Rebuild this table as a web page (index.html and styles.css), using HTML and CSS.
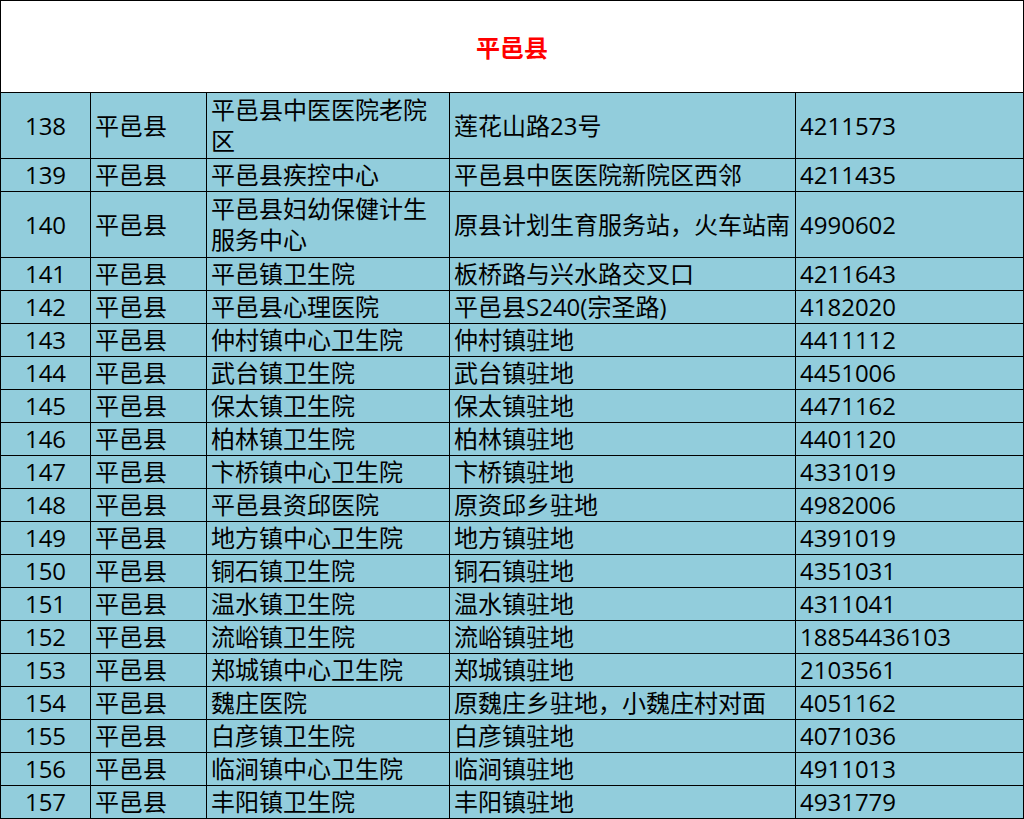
FILE: index.html
```html
<!DOCTYPE html>
<html lang="zh">
<head>
<meta charset="utf-8">
<link rel="stylesheet" href="styles.css">
</head>
<body>
<div class="sheet">
  <div class="title">平邑县</div>

  <div class="c num">138</div><div class="c">平邑县</div><div class="c">平邑县中医医院老院区</div><div class="c">莲花山路23号</div><div class="c">4211573</div>
  <div class="c num">139</div><div class="c">平邑县</div><div class="c">平邑县疾控中心</div><div class="c">平邑县中医医院新院区西邻</div><div class="c">4211435</div>
  <div class="c num">140</div><div class="c">平邑县</div><div class="c">平邑县妇幼保健计生服务中心</div><div class="c">原县计划生育服务站，火车站南</div><div class="c">4990602</div>
  <div class="c num">141</div><div class="c">平邑县</div><div class="c">平邑镇卫生院</div><div class="c">板桥路与兴水路交叉口</div><div class="c">4211643</div>
  <div class="c num">142</div><div class="c">平邑县</div><div class="c">平邑县心理医院</div><div class="c">平邑县S240(宗圣路)</div><div class="c">4182020</div>
  <div class="c num">143</div><div class="c">平邑县</div><div class="c">仲村镇中心卫生院</div><div class="c">仲村镇驻地</div><div class="c">4411112</div>
  <div class="c num">144</div><div class="c">平邑县</div><div class="c">武台镇卫生院</div><div class="c">武台镇驻地</div><div class="c">4451006</div>
  <div class="c num">145</div><div class="c">平邑县</div><div class="c">保太镇卫生院</div><div class="c">保太镇驻地</div><div class="c">4471162</div>
  <div class="c num">146</div><div class="c">平邑县</div><div class="c">柏林镇卫生院</div><div class="c">柏林镇驻地</div><div class="c">4401120</div>
  <div class="c num">147</div><div class="c">平邑县</div><div class="c">卞桥镇中心卫生院</div><div class="c">卞桥镇驻地</div><div class="c">4331019</div>
  <div class="c num">148</div><div class="c">平邑县</div><div class="c">平邑县资邱医院</div><div class="c">原资邱乡驻地</div><div class="c">4982006</div>
  <div class="c num">149</div><div class="c">平邑县</div><div class="c">地方镇中心卫生院</div><div class="c">地方镇驻地</div><div class="c">4391019</div>
  <div class="c num">150</div><div class="c">平邑县</div><div class="c">铜石镇卫生院</div><div class="c">铜石镇驻地</div><div class="c">4351031</div>
  <div class="c num">151</div><div class="c">平邑县</div><div class="c">温水镇卫生院</div><div class="c">温水镇驻地</div><div class="c">4311041</div>
  <div class="c num">152</div><div class="c">平邑县</div><div class="c">流峪镇卫生院</div><div class="c">流峪镇驻地</div><div class="c">18854436103</div>
  <div class="c num">153</div><div class="c">平邑县</div><div class="c">郑城镇中心卫生院</div><div class="c">郑城镇驻地</div><div class="c">2103561</div>
  <div class="c num">154</div><div class="c">平邑县</div><div class="c">魏庄医院</div><div class="c">原魏庄乡驻地，小魏庄村对面</div><div class="c">4051162</div>
  <div class="c num">155</div><div class="c">平邑县</div><div class="c">白彦镇卫生院</div><div class="c">白彦镇驻地</div><div class="c">4071036</div>
  <div class="c num">156</div><div class="c">平邑县</div><div class="c">临涧镇中心卫生院</div><div class="c">临涧镇驻地</div><div class="c">4911013</div>
  <div class="c num">157</div><div class="c">平邑县</div><div class="c">丰阳镇卫生院</div><div class="c">丰阳镇驻地</div><div class="c">4931779</div>
</div>
</body>
</html>
```
FILE: styles.css
```css
html, body {
  margin: 0;
  padding: 0;
  background: #ffffff;
}
.sheet {
  width: 1024px;
  height: 819px;
  box-sizing: border-box;
  background: #000000;
  padding: 1px;
  display: grid;
  grid-template-columns: 89px 115px 242px 345px 227px;
  grid-template-rows: 91px 65px 32px 65px repeat(17, 32px);
  gap: 1px;
  font-family: "Open Sans", "Noto Sans CJK SC", sans-serif;
  font-size: 24px;
  color: #000000;
  overflow: hidden;
}
.title {
  grid-column: 1 / 6;
  background: #ffffff;
  color: #ff0000;
  font-weight: bold;
  font-family: "Noto Sans CJK SC", sans-serif;
  font-size: 24px;
  display: flex;
  align-items: center;
  justify-content: center;
}
.c {
  background: #92cddc;
  display: flex;
  align-items: center;
  padding-left: 4px;
  padding-bottom: 1px;
  line-height: 31px;
  white-space: normal;
  word-break: break-all;
}
.num {
  justify-content: center;
  padding-left: 0;
}
```
